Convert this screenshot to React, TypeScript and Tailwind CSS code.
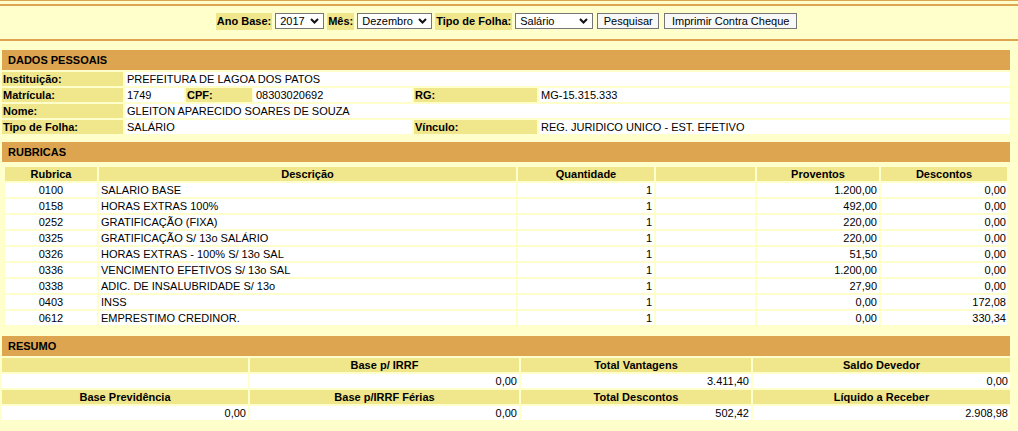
import React from 'react';

const rubricas = [
  { cod: '0100', desc: 'SALARIO BASE', qtd: '1', prov: '1.200,00', descs: '0,00' },
  { cod: '0158', desc: 'HORAS EXTRAS 100%', qtd: '1', prov: '492,00', descs: '0,00' },
  { cod: '0252', desc: 'GRATIFICAÇÃO (FIXA)', qtd: '1', prov: '220,00', descs: '0,00' },
  { cod: '0325', desc: 'GRATIFICAÇÃO S/ 13o SALÁRIO', qtd: '1', prov: '220,00', descs: '0,00' },
  { cod: '0326', desc: 'HORAS EXTRAS - 100% S/ 13o SAL', qtd: '1', prov: '51,50', descs: '0,00' },
  { cod: '0336', desc: 'VENCIMENTO EFETIVOS S/ 13o SAL', qtd: '1', prov: '1.200,00', descs: '0,00' },
  { cod: '0338', desc: 'ADIC. DE INSALUBRIDADE S/ 13o', qtd: '1', prov: '27,90', descs: '0,00' },
  { cod: '0403', desc: 'INSS', qtd: '1', prov: '0,00', descs: '172,08' },
  { cod: '0612', desc: 'EMPRESTIMO CREDINOR.', qtd: '1', prov: '0,00', descs: '330,34' },
];

const Chevron = () => (
  <svg className="pointer-events-none absolute right-[5px] top-[5px]" width="9" height="6" viewBox="0 0 9 6">
    <polyline points="1,1 4.5,4.5 8,1" fill="none" stroke="#111" strokeWidth="2" />
  </svg>
);

const Select = ({ value, options, width }: { value: string; options: string[]; width: string }) => (
  <div className={`relative h-[16px] ${width}`}>
    <select
      defaultValue={value}
      className="appearance-none w-full h-full border border-[#767676] bg-white pl-[4px] pr-[14px] text-[11px] leading-[14px] text-black outline-none rounded-none"
    >
      {options.map((o) => (
        <option key={o}>{o}</option>
      ))}
    </select>
    <Chevron />
  </div>
);

const ToolLabel = ({ children }: { children: React.ReactNode }) => (
  <span className="h-[17px] px-[1px] bg-[#F0E68C] font-bold leading-[17px]">{children}</span>
);

const SectionHeader = ({ title }: { title: string }) => (
  <div className="h-[20px] bg-[#DDA550] pl-[6px] font-bold flex items-center">{title}</div>
);

const Lbl = ({ children, className = '' }: { children?: React.ReactNode; className?: string }) => (
  <div className={`h-[14px] leading-[14px] px-[1px] bg-[#F0E68C] font-bold whitespace-nowrap ${className}`}>{children}</div>
);

const Val = ({ children, className = '' }: { children?: React.ReactNode; className?: string }) => (
  <div className={`h-[14px] leading-[14px] px-[2px] bg-white whitespace-nowrap ${className}`}>{children}</div>
);

export default function App() {
  return (
    <div className="min-h-screen bg-[#FFFFCC] text-[11px] text-black font-['Liberation_Sans',Arial,sans-serif]">
      <div className="h-px bg-[#DDA550]" />
      <div className="h-[3px]" />
      <div className="h-[2px] bg-[#DDA550]" />

      {/* filtros */}
      <div className="h-[33px] pt-[7px] pr-[5px] flex justify-center items-start gap-[3px]">
        <ToolLabel>Ano Base:</ToolLabel>
        <Select value="2017" options={['2017', '2016', '2015']} width="w-[49px]" />
        <ToolLabel>Mês:</ToolLabel>
        <Select value="Dezembro" options={['Dezembro', 'Novembro']} width="w-[75px]" />
        <ToolLabel>Tipo de Folha:</ToolLabel>
        <Select value="Salário" options={['Salário', 'Férias']} width="w-[78px]" />
        <button className="ml-[1px] h-[16px] w-[62px] border border-[#767676] bg-[#F8F8F8] text-[11px] leading-[14px]">
          Pesquisar
        </button>
        <button className="ml-[2px] h-[16px] w-[133px] border border-[#767676] bg-[#F8F8F8] text-[11px] leading-[14px]">
          Imprimir Contra Cheque
        </button>
      </div>
      <div className="h-[2px] bg-[#DDA550]" />

      <div className="ml-[2px] w-[1008px] pt-[9px] pb-[10px]">
        <SectionHeader title="DADOS PESSOAIS" />
        <div className="mt-[2px] grid grid-cols-[121px_59px_66px_158px_123px_1fr] gap-[2px]">
          <Lbl>Instituição:</Lbl>
          <Val className="col-span-5">PREFEITURA DE LAGOA DOS PATOS</Val>

          <Lbl>Matrícula:</Lbl>
          <Val>1749</Val>
          <Lbl>CPF:</Lbl>
          <Val>08303020692</Val>
          <Lbl>RG:</Lbl>
          <Val>MG-15.315.333</Val>

          <Lbl>Nome:</Lbl>
          <Val className="col-span-5">GLEITON APARECIDO SOARES DE SOUZA</Val>

          <Lbl>Tipo de Folha:</Lbl>
          <Val className="col-span-3">SALÁRIO</Val>
          <Lbl>Vínculo:</Lbl>
          <Val>REG. JURIDICO UNICO - EST. EFETIVO</Val>
        </div>

        <div className="mt-[8px]">
          <SectionHeader title="RUBRICAS" />
        </div>
        <div className="mt-[5px] ml-[3px] w-[1002px] grid grid-cols-[92px_417px_136px_99px_122px_1fr] gap-[2px]">
          <Lbl className="text-center">Rubrica</Lbl>
          <Lbl className="text-center">Descrição</Lbl>
          <Lbl className="text-center">Quantidade</Lbl>
          <Lbl />
          <Lbl className="text-center">Proventos</Lbl>
          <Lbl className="text-center">Descontos</Lbl>
          {rubricas.map((r) => (
            <React.Fragment key={r.cod}>
              <Val className="text-center">{r.cod}</Val>
              <Val>{r.desc}</Val>
              <Val className="text-right">{r.qtd}</Val>
              <Val />
              <Val className="text-right">{r.prov}</Val>
              <Val className="text-right !pr-[1px]">{r.descs}</Val>
            </React.Fragment>
          ))}
        </div>

        <div className="mt-[11px]">
          <SectionHeader title="RESUMO" />
        </div>
        <div className="mt-[2px] grid grid-cols-[246px_269px_230px_1fr] gap-[2px]">
          <Lbl />
          <Lbl className="text-center">Base p/ IRRF</Lbl>
          <Lbl className="text-center">Total Vantagens</Lbl>
          <Lbl className="text-center">Saldo Devedor</Lbl>

          <Val />
          <Val className="text-right">0,00</Val>
          <Val className="text-right">3.411,40</Val>
          <Val className="text-right">0,00</Val>

          <Lbl className="text-center">Base Previdência</Lbl>
          <Lbl className="text-center">Base p/IRRF Férias</Lbl>
          <Lbl className="text-center">Total Descontos</Lbl>
          <Lbl className="text-center">Líquido a Receber</Lbl>

          <Val className="text-right">0,00</Val>
          <Val className="text-right">0,00</Val>
          <Val className="text-right">502,42</Val>
          <Val className="text-right">2.908,98</Val>
        </div>
      </div>
    </div>
  );
}
